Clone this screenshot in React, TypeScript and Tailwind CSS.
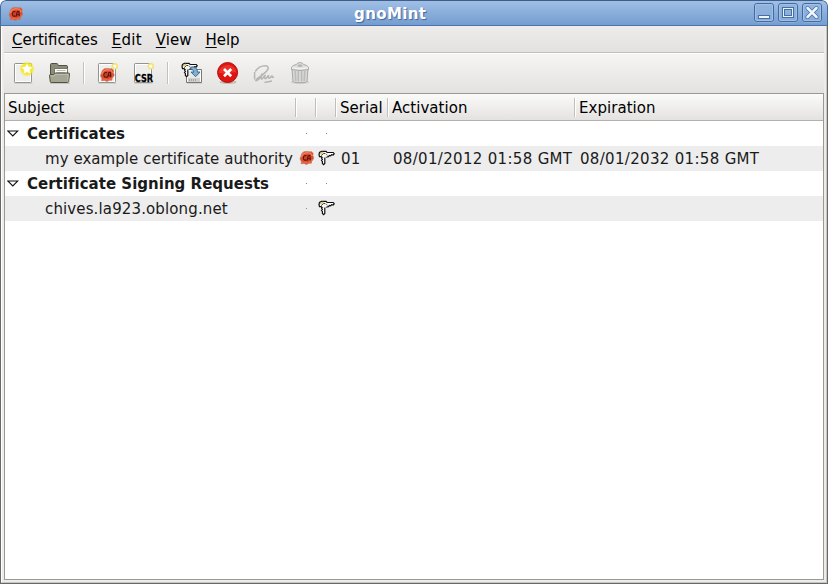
import type { ReactNode } from 'react';

function Seal({ size, className = '' }: { size: number; className?: string }) {
  return (
    <svg width={size} height={size} viewBox="0 0 16 16" className={className}>
      <path
        d="M3 3.2 5 1.7 8 1.4 10 1.8 12.5 1.7 14.2 3.2 13.8 5.5 14.8 8 13.8 10 12.4 11.3 12.4 13.2 10 13.2 7.5 14.5 5 13.4 2.2 13.8 2.4 11.4 1 9 1.8 6.5Z"
        fill="#df4f31"
        stroke="#c27a68"
        strokeWidth=".7"
      />
      <path d="M2.4 7 4 4 7.3 2.6 11.5 3.2 13 6" fill="none" stroke="#f4835b" strokeWidth="1.2" />
      <path d="M3 12.6 6 12 8 13.2 12 11.5 13.5 9" fill="none" stroke="#ef6a43" strokeWidth="1.1" />
      <path d="M5 6 8 4.6 12 5 12.4 9 9 11.4 5 10.6Z" fill="#b93520" opacity=".5" />
      <path d="M7.3 5.6C5 4.9 4 7 4.5 9c.6 1.6 1.9 1.4 2.8.7M8 10.6l1.3-5 1.5-.3.6 5M8.5 8.7h3" fill="none" stroke="#58140c" strokeWidth="1.1" />
    </svg>
  );
}

function Keys({ className = '' }: { className?: string }) {
  return (
    <svg width="17" height="16" viewBox="0 0 17 16" className={className}>
      <path d="M3.7 6.5v2.2l.7.8-.9 1 .9.9v2.1l1.2 1.2 1.2-1.2V7z" fill="#fff" stroke="#111" strokeWidth="1.2" />
      <path d="M8.5 2.5h6.7l1 1.3-1 1.2-1.6-.3-1 1.2-1.2-.4-1 1.2-2.4.3z" fill="#fff" stroke="#111" strokeWidth="1.2" />
      <path d="M1.5 2.5 3.5 1.3h4.6L9.5 3v2.4L8 7.4 5 7.8 3 6.5 1.5 6.6 1 4.5z" fill="#f6f6f2" />
      <path d="M9.5 2.8 8.1 1.3H3.5L1.5 2.5 1 4.5l.5 2.1L3 6.5l1.5 1.2" fill="none" stroke="#111" strokeWidth="1.2" />
      <path d="M2.2 4 4.8 2" stroke="#dcc35c" strokeWidth="1.5" />
      <path d="m3.2 5.6 2.4-2.2 1.8.3M8.4 4.4l1 .8" fill="none" stroke="#222" strokeWidth=".9" />
    </svg>
  );
}

function Sheet() {
  return (
    <>
      <path d="M2.5 22.5h18" stroke="#d0d0cd" />
      <rect x="2.5" y="2.5" width="17" height="19" rx=".8" fill="#eeeeed" stroke="#939390" />
      <path d="M3.5 20.5v-17h15v17z" fill="none" stroke="#fff" />
    </>
  );
}

function Icon({ children }: { children: ReactNode }) {
  return (
    <svg width="24" height="24" viewBox="0 0 24 24" className="shrink-0 overflow-visible">
      {children}
    </svg>
  );
}

function NewIcon() {
  return (
    <Icon>
      <defs>
        <radialGradient id="glow">
          <stop offset="0" stopColor="#fff52c" />
          <stop offset=".65" stopColor="#f6e923" />
          <stop offset="1" stopColor="#f6e923" stopOpacity="0" />
        </radialGradient>
      </defs>
      <Sheet />
      <circle cx="15" cy="8" r="7.8" fill="url(#glow)" />
      <path d="m15 2.2 1.8 3.3 3.9.7-2.7 2.8.6 4-3.6-1.7-3.6 1.7.6-4-2.7-2.8 3.9-.7z" fill="#fff" stroke="#efdf2c" strokeWidth=".4" />
    </Icon>
  );
}

function OpenIcon() {
  return (
    <Icon>
      <path d="M2 22.5h20" stroke="#c4c4c0" />
      <path d="M2.5 20V3.7q0-1.2 1.2-1.2h5.1q.8 0 1 .9l.4 1.1h8q1.3 0 1.3 1.3V18z" fill="#8b8c79" stroke="#50513f" />
      <path d="M6.5 7.5h13V16h-13z" fill="#fff" stroke="#777869" />
      <path d="M8.5 9.5h9M8.5 11.5h9" stroke="#bcbcb5" />
      <path d="M1.5 14.5q0-1 1-1h3l1.3-1.3q.2-.2.7-.2h13q1 0 1 1l-.9 7.7q-.1.8-1 .8H3.2q-.8 0-.9-.8z" fill="#a4a593" stroke="#51523f" />
      <path d="M2.8 15h3.4l1.4-1.6h12.7l-.6 6.9" fill="none" stroke="#c6c7b9" strokeWidth=".8" />
    </Icon>
  );
}

function Ring() {
  return <circle cx="18.8" cy="5.2" r="2.5" fill="#fbf9e9" stroke="#f1e27a" strokeWidth="1.5" />;
}

function NewCaIcon() {
  return (
    <Icon>
      <Sheet />
      <svg x="3.5" y="6" width="16" height="16">
        <Seal size={16} />
      </svg>
      <Ring />
    </Icon>
  );
}

function NewCsrIcon() {
  return (
    <Icon>
      <Sheet />
      <Ring />
      <text x="2.8" y="21" textLength="18.4" lengthAdjust="spacingAndGlyphs" fill="#000" stroke="#000" strokeWidth=".3" className="font-['DejaVu_Sans'] text-[10px] leading-none font-bold">
        CSR
      </text>
    </Icon>
  );
}

function ImportIcon() {
  return (
    <Icon>
      <path d="M7 22.5h15" stroke="#cfcfcc" />
      <path d="M6.5 8.5h15v13h-15z" fill="#e9e9e8" stroke="#777975" />
      <path d="M8 17h12v4H8z" fill="#cfcfcd" />
      <path d="M9.5 18v2M11.5 18v2M13.5 18v2M15.5 18v2" stroke="#a5a6a3" />
      <path d="M7.5 20.5v-11h13v11" fill="none" stroke="#fff" />
      <svg x="1" y="1" width="17" height="16">
        <Keys />
      </svg>
      <path d="M10.8 6.2c4.2-1 6.6 1.2 6.6 4.9h2.6l-4.4 4.6-4.6-4.6h2.8c0-1.8-1-2.6-3-2.5z" fill="#86afd1" stroke="#28648f" strokeWidth=".9" />
    </Icon>
  );
}

function RevokeIcon() {
  return (
    <Icon>
      <ellipse cx="12" cy="21.2" rx="8.5" ry="1.9" fill="#aaa9a5" opacity=".65" />
      <circle cx="11.6" cy="11.5" r="10" fill="#e01410" stroke="#b50b08" />
      <path d="M2.5 12a9.2 9.2 0 0 1 18.2-.5c-5-.8-11 2-18.2.5z" fill="#ec3c33" opacity=".75" />
      <path d="m8 8 7.2 7.2M15.2 8 8 15.2" stroke="#fff" strokeWidth="2.7" />
    </Icon>
  );
}

function SignIcon() {
  return (
    <Icon>
      <path
        d="M3.2 10.5C5.5 7 10 4.6 14 4.8c4.6 1.2 1.4 5.6-3 8.6-3 2.2-6.8 4-7.2 6.2 1.7.6 5-3.6 6.8-6.1M2.6 11v7.5M10 12.5c-.7 2.8-1.6 5-.6 5.6 1 .3 2.5-3 3.5-3.5-.1 1.8-.6 3 .5 3.1 1.2 0 2-2.7 3-3-.2 1.7-.2 2.6 1 2.4 1.3-.3 1.6-2 2.5-2-.3 1.3.8 1.4 2.2 1.1M12.5 21.5l7.5-1.4"
        fill="none"
        stroke="#b5b5b2"
        strokeWidth="1.5"
      />
    </Icon>
  );
}

function TrashIcon() {
  return (
    <Icon>
      <ellipse cx="12" cy="21.3" rx="9.5" ry="1.7" fill="#d2d2cf" />
      <path d="m4 8 1 12.4q.2 1.3 7 1.3t7-1.3L20 8z" fill="#d8d8d6" stroke="#a8a8a5" />
      <path d="m7.2 10 .6 10M10.3 10v10.5M13.6 10v10.5M16.8 10l-.6 10" stroke="#bbbbb8" strokeWidth="1.5" />
      <path d="M3.5 6.3Q4.5 4 8.5 3.5 9 1.6 12 1.6t3.5 1.9q4 .5 5 2.8v2.2q-8.5 2.1-17 0z" fill="#dededc" stroke="#ababa8" />
      <path d="M4.3 6.8q7.7 2 15.4 0" fill="none" stroke="#f8f8f7" />
      <ellipse cx="12" cy="4.6" rx="2.6" ry="1.2" fill="#b1b1ae" />
    </Icon>
  );
}

function WindowButton({ kind }: { kind: 'min' | 'max' | 'close' }) {
  return (
    <svg width="20" height="21" viewBox="0 0 20 21">
      <rect x=".5" y=".5" width="19" height="20" rx="3" fill="none" stroke="#a0bee4" strokeOpacity=".5" />
      <rect x=".5" y="1.5" width="19" height="18" rx="2.5" fill="#8db0dc" fillOpacity=".6" stroke="#416a9f" />
      <rect x="1.5" y="2.5" width="17" height="16" rx="1.5" fill="none" stroke="#a2c0e5" />
      {kind === 'min' && <rect x="4.5" y="13.5" width="11" height="3" fill="#eff4fa" stroke="#456fa5" />}
      {kind === 'max' && (
        <>
          <rect x="5.5" y="6.5" width="9" height="8" fill="none" stroke="#456fa5" strokeWidth="3" />
          <rect x="5.5" y="6.5" width="9" height="8" fill="none" stroke="#e8f0f8" />
        </>
      )}
      {kind === 'close' && (
        <>
          <path d="m5.5 6 9 9M14.5 6l-9 9" stroke="#456fa5" strokeWidth="4" strokeLinecap="round" />
          <path d="m5.5 6 9 9M14.5 6l-9 9" stroke="#f0f5fb" strokeWidth="2.5" strokeLinecap="round" />
        </>
      )}
    </svg>
  );
}

function Separator({ className }: { className: string }) {
  return <div className={`h-[22px] w-[2px] border-l border-[#c2c1be] bg-white ${className}`} />;
}

const grid = 'grid grid-cols-[292px_20px_20px_52px_187px_247px]';

function HeaderCell({ children, last = false }: { children?: ReactNode; last?: boolean }) {
  return (
    <div className="flex items-center justify-between pl-[3px] whitespace-nowrap">
      <span className="pt-[2px] tracking-[0.04px]">{children}</span>
      {!last && <div className="h-[19px] w-[2px] shrink-0 border-r border-white bg-[#c0bfbc]" />}
    </div>
  );
}

function Dot() {
  return <div className="mt-3 ml-[9px] size-px bg-[#918a78]" />;
}

function Group({ label }: { label: string }) {
  return (
    <div className={`${grid} h-[25px] bg-white font-bold`}>
      <div className="flex items-center pl-[2px] whitespace-nowrap">
        <svg width="12" height="8" viewBox="0 0 12 8">
          <path d="M.8 1h10L5.8 6z" fill="#fff" stroke="#111" strokeWidth="1.1" />
        </svg>
        <span className="ml-2 pt-px tracking-[0.015px]">{label}</span>
      </div>
      <Dot />
      <Dot />
    </div>
  );
}

const menu = [
  { label: 'Certificates', tracking: '' },
  { label: 'Edit', tracking: 'tracking-[0.25px]' },
  { label: 'View', tracking: '' },
  { label: 'Help', tracking: '' },
];

export default function App() {
  return (
    <div className="bg-white">
      <div className="flex h-[584px] w-[828px] flex-col overflow-hidden rounded-t-[6px] bg-[#edeceb] font-['DejaVu_Sans','Liberation_Sans',sans-serif] text-[15px] leading-[25px] text-[#1a1a1a]">
        <div className="grid h-[26px] shrink-0 grid-cols-[353px_1fr_auto] rounded-t-[6px] border border-t-[#3f5f8b] border-r-[#456a9e] border-b-[#4a74ad] border-l-[#456a9e] bg-linear-to-b from-[#a0bfe5] to-[#749dd0]">
          <Seal size={16} className="mt-[5px] ml-[7px]" />
          <div className="pt-px text-[15px] leading-[25px] font-bold tracking-[0.4px] text-white [text-shadow:1px_1px_1px_#3d669c]">gnoMint</div>
          <div className="mt-[1px] mr-[5px] flex justify-end gap-1">
            <WindowButton kind="min" />
            <WindowButton kind="max" />
            <WindowButton kind="close" />
          </div>
        </div>

        <div className="flex min-h-0 flex-1 flex-col border-x border-b border-[#686865]">
          <div className="flex min-h-0 flex-1 flex-col border-r border-b border-l border-r-[#c7c6c3] border-b-[#c7c6c3] border-l-white px-[2px] pb-[2px]">
            <nav className="flex h-[27px] shrink-0 gap-[14px] border-b border-[#c0bfbc] bg-linear-to-b from-[#edeceb] to-[#e3e2e0] pt-px pl-2 leading-[27px] text-black">
              {menu.map(({ label, tracking }) => (
                <span key={label} className={tracking}>
                  <span className="underline underline-offset-2">{label[0]}</span>
                  {label.slice(1)}
                </span>
              ))}
            </nav>
            <div className="flex h-[40px] shrink-0 items-center border-t border-white bg-linear-to-b from-[#f5f5f4] to-[#e3e2e0] pb-px pl-2">
              <NewIcon />
              <div className="w-3" />
              <OpenIcon />
              <Separator className="mr-[11px] ml-[11px]" />
              <NewCaIcon />
              <div className="w-3" />
              <NewCsrIcon />
              <Separator className="mr-[11px] ml-[11px]" />
              <ImportIcon />
              <div className="w-3" />
              <RevokeIcon />
              <div className="w-3" />
              <SignIcon />
              <div className="w-3" />
              <TrashIcon />
            </div>

            <div className="min-h-0 flex-1 border border-[#9a9996] bg-white">
              <div className={`${grid} h-[27px] border-b border-[#b2b1ae] bg-linear-to-b from-[#fbfbfa] to-[#e3e2e0] text-black`}>
                <HeaderCell>Subject</HeaderCell>
                <HeaderCell />
                <HeaderCell />
                <HeaderCell>Serial</HeaderCell>
                <HeaderCell>Activation</HeaderCell>
                <HeaderCell last>Expiration</HeaderCell>
              </div>
              <Group label="Certificates" />
              <div className={`${grid} h-[25px] bg-[#ededed] whitespace-nowrap`}>
                <span className="pt-px pl-10 tracking-[0.05px]">my example certificate authority</span>
                <Seal size={16} className="mt-[4px] ml-[2px]" />
                <Keys className="mt-[4px] ml-px" />
                <span className="pt-px pl-[4px] tracking-[0.32px]">01</span>
                <span className="pt-px pl-[4px] tracking-[0.32px]">08/01/2012 01:58 GMT</span>
                <span className="pt-px pl-[4px] tracking-[0.32px]">08/01/2032 01:58 GMT</span>
              </div>
              <Group label="Certificate Signing Requests" />
              <div className={`${grid} h-[25px] bg-[#ededed] whitespace-nowrap`}>
                <span className="pt-px pl-10 tracking-[0.13px]">chives.la923.oblong.net</span>
                <Dot />
                <Keys className="mt-[4px] ml-px" />
              </div>
            </div>
          </div>
        </div>
      </div>
    </div>
  );
}
